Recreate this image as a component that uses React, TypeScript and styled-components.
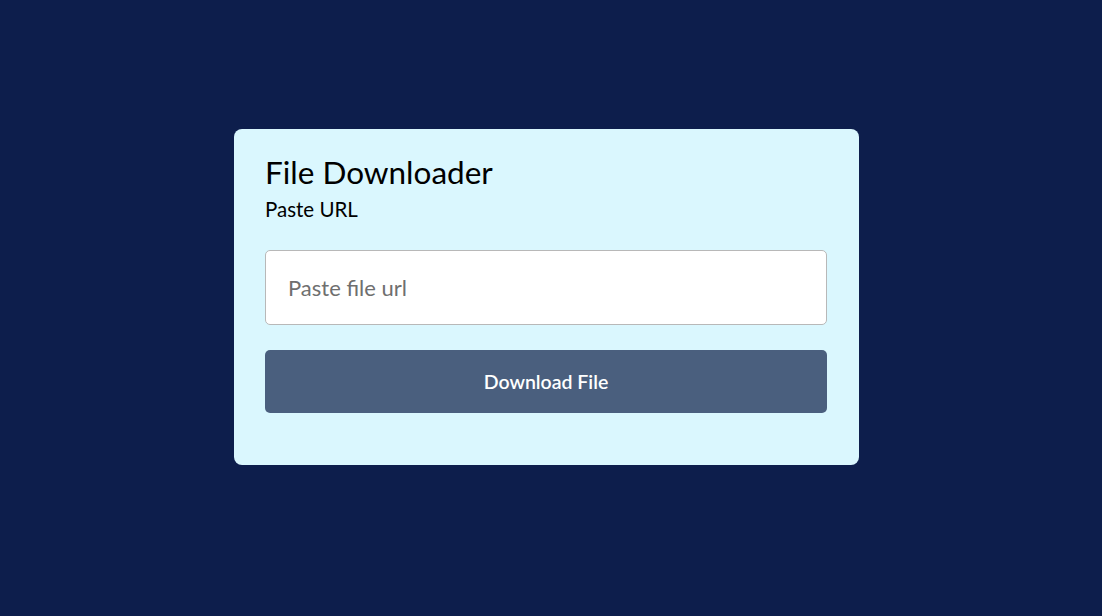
import styled, { createGlobalStyle } from 'styled-components'

const GlobalStyle = createGlobalStyle`
  html, body {
    margin: 0;
    padding: 0;
    background: #0d1e4c;
  }

  * {
    box-sizing: border-box;
  }
`

const Page = styled.main`
  min-height: 100vh;
  display: flex;
  align-items: center;
  justify-content: center;
  padding: 0 9px 22px 0;
  font-family: "Lato", "Open Sans", sans-serif;
`

const Card = styled.section`
  width: 625px;
  background: #daf7fe;
  border-radius: 8px;
  padding: 25px 32px 52px 31px;
`

const Title = styled.h1`
  margin: 0;
  font: 400 31.5px "Lato", sans-serif;
  line-height: 36px;
  color: #000;
`

const Label = styled.label`
  display: block;
  margin: 7px 0 0;
  font: 400 20.5px "Lato", sans-serif;
  line-height: 24px;
  color: #000;
`

const UrlInput = styled.input`
  display: block;
  width: 100%;
  height: 75px;
  margin-top: 29px;
  padding: 0 22px;
  border: 1px solid #b8b8b8;
  border-radius: 5px;
  background: #fff;
  font: 400 22px "Lato", sans-serif;
  color: #222;
  outline: none;

  &::placeholder {
    color: #6f6f6f;
  }
`

const DownloadButton = styled.button`
  display: block;
  width: 100%;
  height: 63px;
  margin-top: 25px;
  border: 0;
  border-radius: 5px;
  background: #4a5f7e;
  color: #fff;
  font: 600 19.5px "Lato", sans-serif;
  cursor: pointer;

  &:hover {
    background: #53698a;
  }
`

export default function App() {
  return (
    <>
      <GlobalStyle />
      <Page>
        <Card>
          <Title>File Downloader</Title>
          <Label htmlFor="file-url">Paste URL</Label>
          <UrlInput id="file-url" type="text" placeholder="Paste file url" />
          <DownloadButton type="button">Download File</DownloadButton>
        </Card>
      </Page>
    </>
  )
}
